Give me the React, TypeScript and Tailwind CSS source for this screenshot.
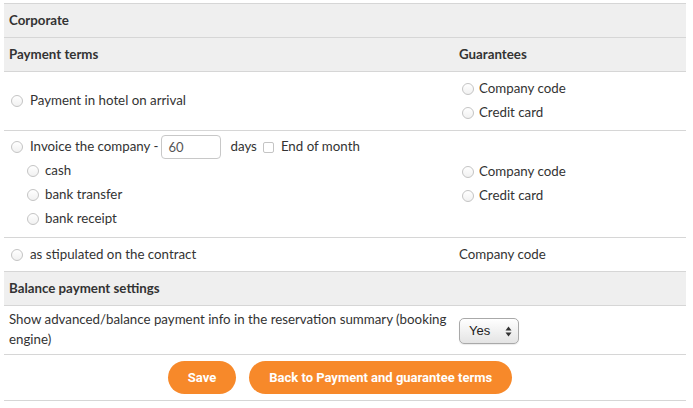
const Radio = () => (
    <span className="inline-block w-[12px] h-[12px] rounded-full border border-[#c4c4c4] bg-gradient-to-b from-white to-[#f1f1f1] shrink-0" />
);

const RadioLine = ({ label, indent = false }: { label: string; indent?: boolean }) => (
    <div className={`flex items-center h-[24px] ${indent ? 'pl-[23px]' : 'pl-[7px]'}`}>
        <Radio />
        <span className={indent ? 'ml-[6px]' : 'ml-[7px]'}>{label}</span>
    </div>
);

const GuaranteeRadio = ({ label }: { label: string }) => (
    <div className="flex items-center h-[24px] pl-[8px]">
        <Radio />
        <span className="ml-[5px]">{label}</span>
    </div>
);

const Guarantees = () => (
    <div className="flex flex-col">
        <GuaranteeRadio label="Company code" />
        <GuaranteeRadio label="Credit card" />
    </div>
);

const App = () => {
    return (
        <div
            className="bg-white w-[693px] h-[408px] pt-[3px] text-[13.3px] text-[#333]"
            style={{ fontFamily: 'Lato, "Open Sans", sans-serif' }}
        >
            <div className="ml-[4px] w-[682px] border-t border-[#d6d6d6]">
                {/* Corporate */}
                <div className="h-[34px] flex items-center px-[5px] bg-[#efefef] border-b border-[#d6d6d6] font-bold">
                    Corporate
                </div>

                {/* header */}
                <div className="h-[34px] grid grid-cols-[450px_1fr] items-center bg-[#efefef] border-b border-[#d6d6d6] font-bold">
                    <div className="px-[5px]">Payment terms</div>
                    <div className="px-[5px]">Guarantees</div>
                </div>

                {/* hotel on arrival */}
                <div className="h-[59px] grid grid-cols-[450px_1fr] items-center border-b border-[#d6d6d6]">
                    <RadioLine label="Payment in hotel on arrival" />
                    <Guarantees />
                </div>

                {/* invoice */}
                <div className="h-[107px] grid grid-cols-[450px_1fr] items-center border-b border-[#d6d6d6]">
                    <div className="flex flex-col -mt-[2px]">
                        <div className="flex items-center h-[24px] pl-[7px]">
                            <Radio />
                            <span className="ml-[7px]">Invoice the company -</span>
                            <input
                                readOnly
                                value="60"
                                className="ml-[3px] w-[60px] h-[24px] border border-[#c8c8c8] rounded-[4px] px-[6px] text-[13px] text-[#555] outline-none"
                            />
                            <span className="ml-[9px]">days</span>
                            <span className="ml-[6px] inline-block w-[11px] h-[11px] border border-[#c4c4c4] rounded-[2px] bg-white" />
                            <span className="ml-[7px]">End of month</span>
                        </div>
                        <RadioLine label="cash" indent />
                        <RadioLine label="bank transfer" indent />
                        <RadioLine label="bank receipt" indent />
                    </div>
                    <Guarantees />
                </div>

                {/* stipulated */}
                <div className="h-[34px] grid grid-cols-[450px_1fr] items-center border-b border-[#d6d6d6]">
                    <RadioLine label="as stipulated on the contract" />
                    <div className="px-[5px]">Company code</div>
                </div>

                {/* balance header */}
                <div className="h-[34px] flex items-center px-[5px] bg-[#efefef] border-b border-[#d6d6d6] font-bold">
                    Balance payment settings
                </div>

                {/* show advanced */}
                <div className="h-[49px] grid grid-cols-[450px_1fr] items-center border-b border-[#d6d6d6]">
                    <div className="px-[5px] leading-[20px] -mt-[2px]">
                        Show advanced/balance payment info in the reservation summary (booking engine)
                    </div>
                    <div className="px-[5px] pt-[2px]">
                        <div className="w-[60px] h-[26px] rounded-[5px] border border-[#a9a9a9] bg-gradient-to-b from-white to-[#e4e4e4] flex items-center justify-between pl-[9px] pr-[6px] shadow-[0_1px_1px_rgba(0,0,0,0.08)]">
                            <span className="text-[#222] text-[13px]" style={{ fontFamily: '"Liberation Sans", Arial, sans-serif' }}>Yes</span>
                            <svg width="7" height="11" viewBox="0 0 7 11">
                                <path d="M3.5 0.5 L6.5 4.5 L0.5 4.5 Z" fill="#333" />
                                <path d="M3.5 10.5 L6.5 6.5 L0.5 6.5 Z" fill="#333" />
                            </svg>
                        </div>
                    </div>
                </div>

                {/* buttons */}
                <div
                    className="h-[46px] flex items-center justify-center gap-[13px] pr-[10px] border-b border-[#d6d6d6]"
                    style={{ fontFamily: 'Roboto, sans-serif' }}
                >
                    <button className="h-[33px] px-[20px] rounded-full bg-[#f7892a] text-white font-bold text-[13px]">
                        Save
                    </button>
                    <button className="h-[33px] px-[20px] rounded-full bg-[#f7892a] text-white font-bold text-[13px]">
                        Back to Payment and guarantee terms
                    </button>
                </div>
            </div>
        </div>
    );
};

export default App;
